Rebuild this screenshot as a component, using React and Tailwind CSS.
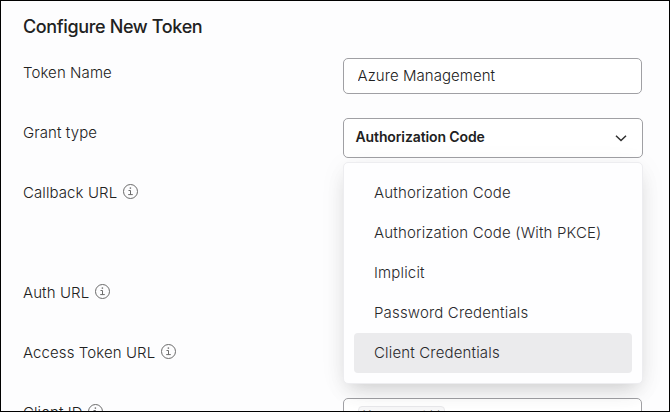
import React from "react";

function InfoIcon() {
  return (
    <svg width="16" height="16" viewBox="0 0 16 16" fill="none" stroke="#6b6b6b" className="-mt-1 ml-[4.7px] shrink-0">
      <circle cx="8.5" cy="8.5" r="7" />
      <path d="M6.5 7.5H8.5V11.5M6.2 11.6H10.8" />
      <rect x="7.7" y="4.4" width="1.4" height="1.4" fill="#6b6b6b" stroke="none" />
    </svg>
  );
}

function Label({ text, info }) {
  return (
    <div className="flex h-[30px] w-[320px] shrink-0 items-center text-[15px] leading-[30px] tracking-[0.09px]">
      <span>{text}</span>
      {info && <InfoIcon />}
    </div>
  );
}

const options = ["Authorization Code", "Authorization Code (With PKCE)", "Implicit", "Password Credentials", "Client Credentials"];

function GrantSelect() {
  return (
    <div className="relative h-10 w-[300px]">
      <button className="flex h-10 w-full items-center justify-between rounded-[5px] border border-[#a0a0a4] bg-white pr-[14px] pl-[11.5px] text-[14px] font-semibold tracking-[-0.11px]">
        <span className="pb-[3px]">Authorization Code</span>
        <svg width="14" height="14" viewBox="0 0 14 14" fill="none" stroke="#303030" strokeWidth="1.5">
          <path d="M2 4.7L7 9.5L12 4.7" />
        </svg>
      </button>
      <ul className="absolute top-11 left-0 z-10 w-[300px] rounded-[5px] border border-[#ededf0] bg-[#fefeff] p-[10px] text-[15px] font-light tracking-[0.16px] text-[#28282b] shadow-[0_10px_20px_-6px_rgba(0,0,0,0.17),0_4px_28px_rgba(0,0,0,0.05)]">
        {options.map((option, i) => (
          <li key={option} className={i === 4 ? "flex h-10 items-center rounded bg-[#ebebed] px-5" : "flex h-10 items-center px-5"}>
            {option}
          </li>
        ))}
      </ul>
    </div>
  );
}

export default function App() {
  return (
    <main className="h-[412px] w-[670px] overflow-hidden border border-black bg-[#fdfdfe] pl-[22px] font-['Inter',sans-serif] font-light text-[#212121]">
      <h1 className="flex h-[57px] items-center pb-[7px] text-[18px] font-medium tracking-[-0.36px]">Configure New Token</h1>
      <div className="flex h-[60px] items-start">
        <Label text="Token Name" />
        <input readOnly defaultValue="Azure Management" className="h-9 w-[299px] rounded-[5px] border border-[#a0a0a4] bg-white px-[13.5px] pb-[2px] text-[15px] tracking-[0.05px]" />
      </div>
      <div className="flex h-[60px] items-start">
        <Label text="Grant type" />
        <GrantSelect />
      </div>
      <div className="flex h-[100px] items-start"><Label text="Callback URL" info /></div>
      <div className="flex h-[60px] items-start"><Label text="Auth URL" info /></div>
      <div className="flex h-[60px] items-start"><Label text="Access Token URL" info /></div>
      <div className="flex h-[60px] items-start">
        <Label text="Client ID" info />
        <div className="h-9 w-[299px] rounded-[5px] border border-[#a0a0a4] bg-white px-[14px] pt-[7px]">
          <span className="flex h-5 w-[87px] items-center justify-center rounded border border-[#e8e8eb] bg-[#f7f7f8] pb-[2px] text-[12px] leading-none text-[#777]">Your secret Id</span>
        </div>
      </div>
    </main>
  );
}
